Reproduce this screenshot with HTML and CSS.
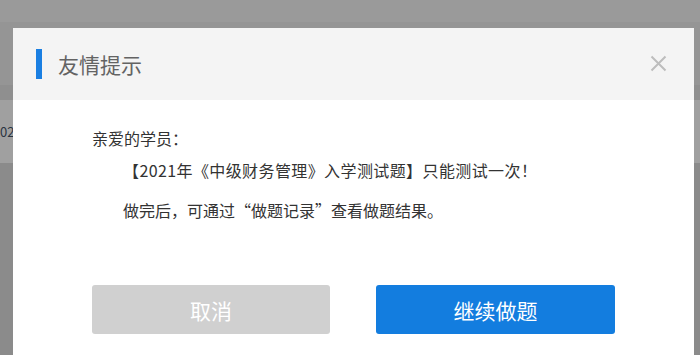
FILE: index.html
```html
<html>
  <head>
    <meta name="viewport" content="width=device-width, initial-scale=1">
    <link rel="stylesheet" href="styles.css">
  </head>
  <body>
    <div class="page">
      <div class="topbar"></div>
      <div class="subbar"></div>
      <div class="thead"></div>
      <div class="row"><span class="row-text">02</span></div>
      <div class="rest"></div>
    </div>

    <div class="modal">
      <div class="modal-head">
        <span class="mark"></span>
        <span class="modal-title">友情提示</span>
        <span class="close">
          <svg width="17" height="17" viewBox="0 0 17 17">
            <path d="M1.5 1.5 L15.5 15.5 M15.5 1.5 L1.5 15.5" stroke="#bdbdbd" stroke-width="2" fill="none"/>
          </svg>
        </span>
      </div>
      <div class="modal-body">
        <p class="greet">亲爱的学员：</p>
        <p class="line first">【2021年《中级财务管理》入学测试题】只能测试一次！</p>
        <p class="line second">做完后，可通过“做题记录”查看做题结果。</p>
        <div class="actions">
          <button class="btn cancel">取消</button>
          <button class="btn go">继续做题</button>
        </div>
      </div>
    </div>
  </body>
</html>
```

FILE: styles.css
```css
body {
  margin: 0;
  width: 700px;
  height: 355px;
  overflow: hidden;
  position: relative;
  background: #8b8b8b;
  font-family: "Noto Sans CJK SC", "Noto Sans", sans-serif;
}
.page {
  display: flex;
  flex-direction: column;
}
.topbar {
  height: 22px;
  background: #9a9a9a;
}
.subbar {
  height: 63px;
  background: #959595;
}
.thead {
  height: 15px;
  background: #8f8f8f;
}
.row {
  height: 63px;
  background: #a0a0a0;
  display: flex;
  align-items: center;
}
.row-text {
  margin-left: 0;
  font-size: 13px;
  color: #2b3440;
}
.rest {
  height: 192px;
  background: #8b8b8b;
}

/* dialog sits over the page */
.modal {
  position: absolute;
  left: 13px;
  top: 28px;
  width: 681px;
  height: 340px;
  background: #fff;
}
.modal-head {
  height: 72px;
  background: #f4f4f4;
  display: flex;
  align-items: center;
  padding-left: 23px;
  padding-right: 27px;
}
.mark {
  width: 6px;
  height: 30px;
  background: #1a7fe2;
  margin-right: 16px;
}
.modal-title {
  font-size: 21px;
  color: #636363;
  flex: 1;
}
.close {
  display: flex;
  margin-top: -1px;
}
.modal-body {
  padding: 26px 0 0 79px;
  color: #333;
  font-size: 16px;
}
.modal-body p {
  margin: 0;
  line-height: 24px;
}
.line {
  padding-left: 31px;
}
.first {
  margin-top: 8px !important;
  letter-spacing: 0.4px;
}
.second {
  margin-top: 16px !important;
}
.actions {
  display: flex;
  gap: 46px;
  margin-top: 63px;
}
.btn {
  width: 238px;
  height: 49px;
  border: none;
  border-radius: 3px;
  font-family: "Noto Sans CJK SC", sans-serif;
  font-size: 21px;
  color: #fff;
  outline: none;
}
.cancel {
  background: #d0d0d0;
}
.go {
  width: 239px;
  background: #137ddf;
}
```
